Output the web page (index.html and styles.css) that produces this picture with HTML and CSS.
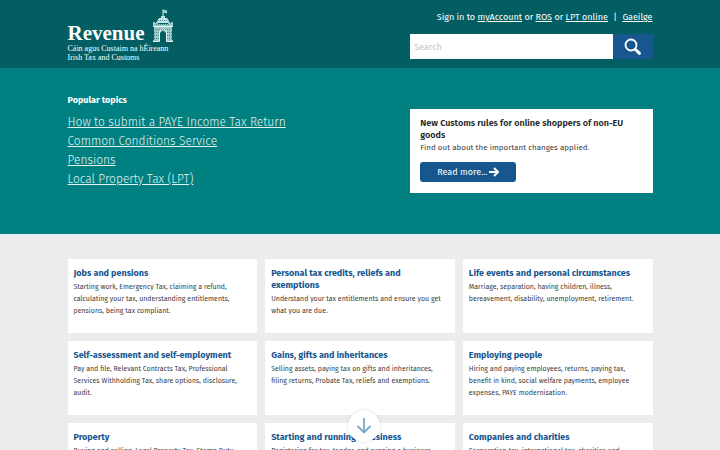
FILE: index.html
```html
<!DOCTYPE html>
<html lang="en">
<head>
<meta charset="utf-8">
<meta name="viewport" content="width=device-width, initial-scale=1">
<title>Revenue</title>
<link rel="stylesheet" href="styles.css">
</head>
<body>
<header class="site-header">
  <div class="container header-row">
    <a class="brand" href="#">
      <span class="brand-top">
        <span class="brand-name">Revenue</span>
        <svg class="crest" viewBox="0 0 22 33" aria-hidden="true">
          <path d="M11 9V0.500" stroke="#d9efef" fill="none"/>
          <path d="M11 1c2-1 2 1 4 0v3c-2 1-2-1-4 0z" fill="#9fd0d0"/>
          <path fill="#c4e3e3" d="M5 12l2-3h2V7h4v2h2l2 3v2H5z"/>
          <path fill="#9ccaca" fill-rule="evenodd" d="M1 13h2v1h1v-1h2v2h10v-2h2v1h1v-1h2v5h-1v13h1v2h-7V24a3.500 4 0 0 0-6 0v9H1v-2h1V18H1z"/>
          <path fill="none" stroke="#e9f7f7" d="M1 17.500h20M7.500 32v-8a3.500 4 0 0 1 7 0v8M1 32.500h6M15 32.500h6"/>
          <path fill="none" stroke="#2d7b7d" stroke-width=".8" stroke-dasharray="1 1" d="M3 20.500h16M2 23.500h5M15 23.500h5M2 26.500h5M15 26.500h5M2 29.500h5M15 29.500h5M6 11.500h10M4 15.500h14"/>
        </svg>
      </span>
      <span class="brand-line">Cáin agus Custaim na hÉireann</span>
      <span class="brand-line">Irish Tax and Customs</span>
    </a>
    <div class="header-tools">
      <nav class="account-links" aria-label="Account">
        Sign in to <a href="#">myAccount</a> or <a href="#">ROS</a> or <a href="#">LPT online</a>
        <span class="divider">|</span>
        <a href="#">Gaeilge</a>
      </nav>
      <form class="search">
        <input class="search-input" type="text" placeholder="Search" aria-label="Search">
        <button class="search-button" type="button" aria-label="Search">
          <svg width="18" height="18" viewBox="0 0 18 18" fill="none" stroke="#fff" aria-hidden="true">
            <circle cx="7" cy="7" r="5.500" stroke-width="1.800"/>
            <path d="M11.500 11.500l4 3.800" stroke-width="3" stroke-linecap="round"/>
          </svg>
        </button>
      </form>
    </div>
  </div>
</header>
<section class="hero">
  <div class="container hero-row">
    <div class="topics">
      <h2 class="topics-title">Popular topics</h2>
      <ul class="topics-list">
        <li><a href="#">How to submit a PAYE Income Tax Return</a></li>
        <li><a href="#">Common Conditions Service</a></li>
        <li><a href="#">Pensions</a></li>
        <li><a href="#">Local Property Tax (LPT)</a></li>
      </ul>
    </div>
    <article class="notice">
      <h2 class="notice-title">New Customs rules for online shoppers of non-EU goods</h2>
      <p class="notice-text">Find out about the important changes applied.</p>
      <a class="notice-button" href="#">Read more...
        <svg width="10" height="10" viewBox="0 0 10 10" fill="none" stroke="#fff" stroke-width="2" aria-hidden="true"><path d="M0 5h8.500M5 1l4 4-4 4"/></svg>
      </a>
    </article>
  </div>
</section>
<main class="container cards">
  <article class="card"><h3><a href="#">Jobs and pensions</a></h3><p>Starting work, Emergency Tax, claiming a refund, calculating your tax, understanding entitlements, pensions, being tax compliant.</p></article>
  <article class="card"><h3><a href="#">Personal tax credits, reliefs and exemptions</a></h3><p>Understand your tax entitlements and ensure you get what you are due.</p></article>
  <article class="card"><h3><a href="#">Life events and personal circumstances</a></h3><p>Marriage, separation, having children, illness, bereavement, disability, unemployment, retirement.</p></article>
  <article class="card"><h3><a href="#">Self-assessment and self-employment</a></h3><p>Pay and file, Relevant Contracts Tax, Professional Services Withholding Tax, share options, disclosure, audit.</p></article>
  <article class="card"><h3><a href="#">Gains, gifts and inheritances</a></h3><p>Selling assets, paying tax on gifts and inheritances, filing returns, Probate Tax, reliefs and exemptions.</p></article>
  <article class="card"><h3><a href="#">Employing people</a></h3><p>Hiring and paying employees, returns, paying tax, benefit in kind, social welfare payments, employee expenses, PAYE modernisation.</p></article>
  <article class="card"><h3><a href="#">Property</a></h3><p>Buying and selling, Local Property Tax, Stamp Duty.</p></article>
  <article class="card"><h3><a href="#">Starting and running a business</a></h3><p>Registering for tax, tender, and running a business.</p></article>
  <article class="card"><h3><a href="#">Companies and charities</a></h3><p>Corporation tax, international tax, charities and.</p></article>
</main>
<button class="scroll-down" type="button" aria-label="Scroll down">
  <svg width="16" height="16" viewBox="0 0 16 16" fill="none" stroke="#76a7ca" stroke-width="1.800" aria-hidden="true"><path d="M8 0v14M1.500 8L8 14.500 14.500 8"/></svg>
</button>
</body>
</html>
```
FILE: styles.css
```css
* { box-sizing: border-box; }

html { scrollbar-width: none; }

body {
  margin: 0;
  background: #ebecee;
  color: #404040;
  font-family: "Fira Sans", "Noto Sans", sans-serif;
  font-size: 8px;
}

h2, h3, p, ul { margin: 0; padding: 0; }

.container { width: 81.25%; margin: 0 auto; }

.site-header { background: #025e62; color: #fff; }

.header-row {
  display: flex;
  justify-content: space-between;
  min-height: 68px;
}

.brand {
  display: flex;
  flex-direction: column;
  padding-top: 9px;
  color: #fff;
  font-family: "Liberation Serif", serif;
  text-decoration: none;
}

.brand-top { display: flex; align-items: flex-end; gap: 7px; height: 35px; }
.brand-name { font-size: 21px; line-height: 21px; font-weight: 700; }
.crest { align-self: flex-start; width: 22px; height: 33px; }
.brand-line { font-size: 8px; line-height: 9px; }

.header-tools { width: 41.4%; padding-top: 10px; }

.account-links { font-size: 9px; line-height: 14px; text-align: right; white-space: nowrap; }
.account-links a { color: inherit; }
.divider { margin: 0 3px; }

.search { display: flex; height: 25px; margin-top: 10px; }

.search-input {
  flex: 1;
  min-width: 0;
  padding: 0 4px;
  border: 0;
  background: #fff;
  font: inherit;
  font-size: 9px;
}

.search-input::placeholder { color: #c4c4c4; }

.search-button {
  display: grid;
  place-items: center;
  width: 40px;
  padding: 0;
  border: 0;
  background: #17568f;
}

.hero { background: #008080; color: #fff; }

.hero-row {
  display: flex;
  justify-content: space-between;
  padding: 25px 0 41px;
}

.topics-title { font-size: 9px; line-height: 14px; }
.topics-list { margin-top: 6px; list-style: none; font-size: 12px; line-height: 19px; font-weight: 300; }
.topics-list a { color: #e0f2f2; }

.notice {
  width: 41.4%;
  margin-top: 16px;
  padding: 8px 10px 11px;
  background: #fff;
  color: #404040;
}

.notice-title { color: #262626; font-size: 9px; line-height: 12px; font-weight: 600; }
.notice-text { line-height: 14px; }

.notice-button {
  display: inline-flex;
  align-items: center;
  justify-content: center;
  gap: 2px;
  width: 96px;
  height: 20px;
  margin-top: 7px;
  border-radius: 3px;
  background: #17568f;
  color: #fff;
  font-size: 9px;
  text-decoration: none;
}

.cards {
  display: grid;
  grid-template-columns: repeat(3, 1fr);
  grid-auto-rows: minmax(74px, auto);
  gap: 8px;
  padding: 25px 0;
}

.card { padding: 8px 10px 8px 6px; background: #fff; }
.card h3 { font-size: 9px; line-height: 12px; }
.card h3 a { color: #17568f; text-decoration: none; }
.card p { margin-top: 2px; font-size: 7px; line-height: 12px; }

.scroll-down {
  position: fixed;
  bottom: 8px;
  left: calc(50% - 12px);
  display: grid;
  place-items: center;
  width: 32px;
  height: 32px;
  padding: 0;
  border: 0;
  border-radius: 50%;
  background: #fff;
  box-shadow: 0 0 3px #00000026;
}
```
